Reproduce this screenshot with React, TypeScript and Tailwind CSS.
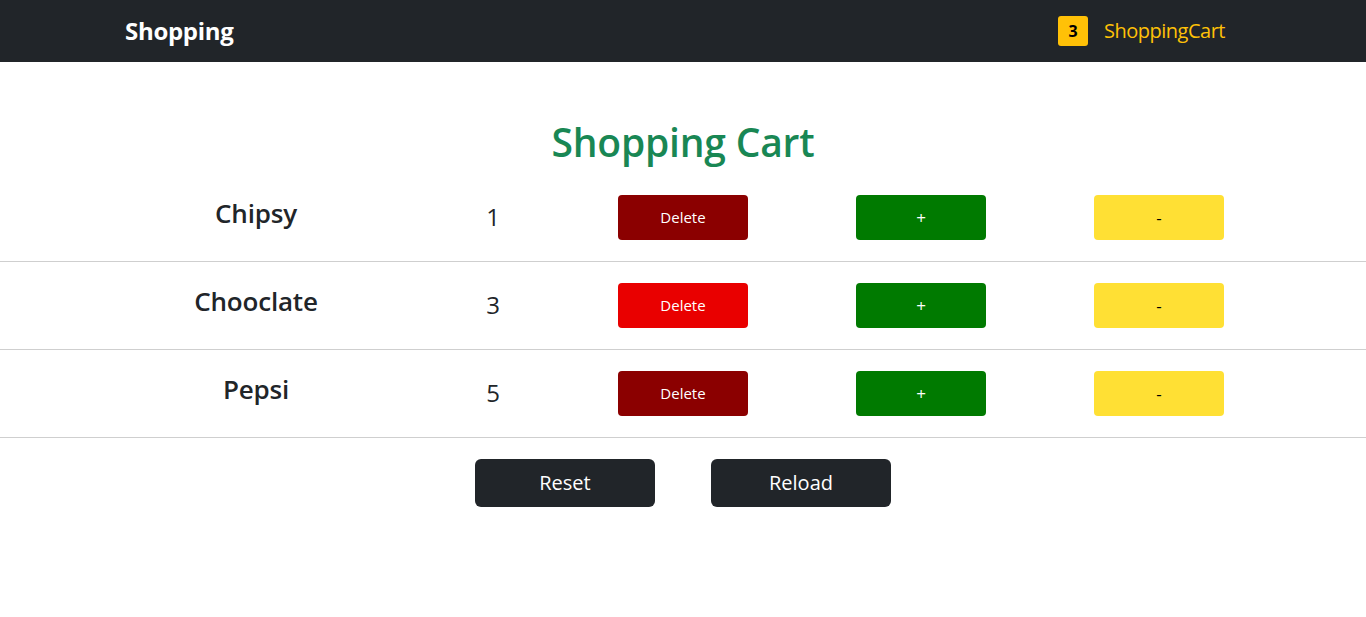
const items = [
  { id: 1, name: "Chipsy", count: 1, del: "bg-[#8b0000]" },
  { id: 2, name: "Chooclate", count: 3, del: "bg-[#e90000]" },
  { id: 3, name: "Pepsi", count: 5, del: "bg-[#8b0000]" },
]

export default function App() {
  return (
    <div className="min-h-screen bg-white font-['Open_Sans',sans-serif] text-[#212529]">
      <nav className="h-[62px] bg-[#212529]">
        <div className="mx-auto flex h-full w-[1140px] items-center justify-between px-3">
          <span className="text-[24px] font-bold tracking-[-0.3px] text-white">Shopping</span>
          <div className="flex items-center gap-4 pr-4">
            <span className="flex h-[30px] w-[30px] items-center justify-center rounded-[3px] bg-[#ffc107] text-[16px] font-bold text-black">
              3
            </span>
            <span className="text-[20px] tracking-[-0.5px] text-[#ffc107]">ShoppingCart</span>
          </div>
        </div>
      </nav>

      <h1 className="mt-[57px] text-center text-[39px] leading-[1.2] font-semibold tracking-[-0.2px] text-[#198754]">
        Shopping Cart
      </h1>

      <div className="mt-[8px]">
        {items.map((it) => (
          <div key={it.id} className="flex h-[88px] items-center border-b border-[#cfcfcf] pl-[137px]">
            <h4 className="mb-2 w-[238px] text-center text-[26px] font-semibold tracking-[-0.2px]">{it.name}</h4>
            <span className="w-[236px] text-center text-[24px] font-normal">{it.count}</span>
            <div className="ml-[7px] flex gap-[108px]">
              <button className={`h-[45px] w-[130px] rounded-[4px] ${it.del} text-[15px] text-white`}>Delete</button>
              <button className="h-[45px] w-[130px] rounded-[4px] bg-[#007a00] text-[17px] font-medium text-white">+</button>
              <button className="h-[45px] w-[130px] rounded-[4px] bg-[#ffe034] text-[17px] text-black">-</button>
            </div>
          </div>
        ))}
      </div>

      <div className="mt-[21px] flex justify-center gap-[56px]">
        <button className="h-[48px] w-[180px] rounded-[6px] bg-[#212529] text-[20px] text-white">Reset</button>
        <button className="h-[48px] w-[180px] rounded-[6px] bg-[#212529] text-[20px] text-white">Reload</button>
      </div>
    </div>
  )
}
